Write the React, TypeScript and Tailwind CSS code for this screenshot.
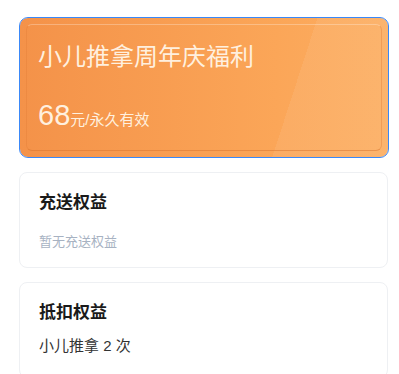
import React from "react";

const font = { fontFamily: '"Liberation Sans","Noto Sans CJK SC",sans-serif' };

export default function App() {
  return (
    <div
      className="min-h-[374px] w-[399px] bg-white pt-[17px] pl-[19px] flex flex-col gap-[14px]"
      style={font}
    >
      <div className="w-[370px] h-[141px] rounded-[9px] border border-[#3a88f8] p-[6px] bg-clip-padding bg-[linear-gradient(108deg,rgba(255,255,255,0)_72%,rgba(255,255,255,0.07)_72%),linear-gradient(90deg,#f49249,#fba658_70%,#fcae62)]">
        <div className="h-full rounded-[6px] border border-t-[rgba(255,255,255,0.28)] border-x-[rgba(230,130,60,0.45)] border-b-[rgba(215,115,45,0.5)] pl-[11px] flex flex-col">
          <div className="pt-[16px] text-[24px] leading-[32px] font-normal text-[#fff0df]">
            小儿推拿周年庆福利
          </div>
          <div className="mt-[27px] flex items-baseline text-[#fff0df]">
            <span className="text-[29px] leading-[30px] font-medium">68</span>
            <span className="text-[15px] leading-[30px] font-normal">元/永久有效</span>
          </div>
        </div>
      </div>

      <div className="w-[369px] rounded-[8px] border border-[#eef0f3] pl-[19px] pt-[18px] pb-[15px]">
        <div className="text-[17px] leading-[24px] font-bold text-[#1a1a1a]">充送权益</div>
        <div className="mt-[17px] text-[13px] leading-[20px] text-[#a7b2c2]">暂无充送权益</div>
      </div>

      <div className="w-[369px] rounded-[8px] border border-[#eef0f3] pl-[19px] pt-[18px] pb-[20px]">
        <div className="text-[17px] leading-[24px] font-bold text-[#1a1a1a]">抵扣权益</div>
        <div className="mt-[10px] text-[15px] leading-[22px] text-[#333333]">小儿推拿 2 次</div>
      </div>
    </div>
  );
}
